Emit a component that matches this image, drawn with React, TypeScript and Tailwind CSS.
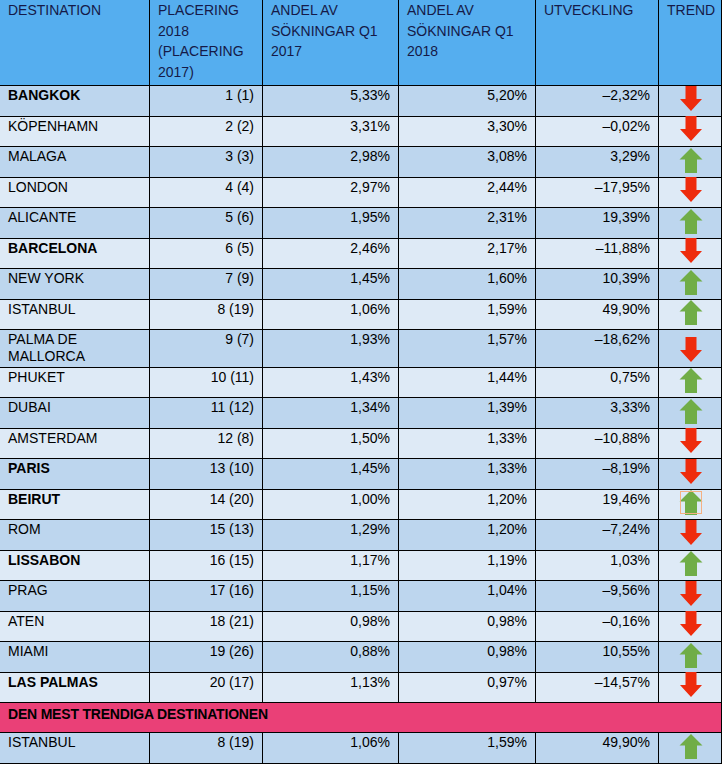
const rows = [
  { name: "BANGKOK", bold: true, rank: "1 (1)", q17: "5,33%", q18: "5,20%", dev: "–2,32%", up: false },
  { name: "KÖPENHAMN", rank: "2 (2)", q17: "3,31%", q18: "3,30%", dev: "–0,02%", up: false },
  { name: "MALAGA", rank: "3 (3)", q17: "2,98%", q18: "3,08%", dev: "3,29%", up: true },
  { name: "LONDON", rank: "4 (4)", q17: "2,97%", q18: "2,44%", dev: "–17,95%", up: false },
  { name: "ALICANTE", rank: "5 (6)", q17: "1,95%", q18: "2,31%", dev: "19,39%", up: true },
  { name: "BARCELONA", bold: true, rank: "6 (5)", q17: "2,46%", q18: "2,17%", dev: "–11,88%", up: false },
  { name: "NEW YORK", rank: "7 (9)", q17: "1,45%", q18: "1,60%", dev: "10,39%", up: true },
  { name: "ISTANBUL", rank: "8 (19)", q17: "1,06%", q18: "1,59%", dev: "49,90%", up: true },
  { name: "PALMA DE MALLORCA", rank: "9 (7)", q17: "1,93%", q18: "1,57%", dev: "–18,62%", up: false },
  { name: "PHUKET", rank: "10 (11)", q17: "1,43%", q18: "1,44%", dev: "0,75%", up: true },
  { name: "DUBAI", rank: "11 (12)", q17: "1,34%", q18: "1,39%", dev: "3,33%", up: true },
  { name: "AMSTERDAM", rank: "12 (8)", q17: "1,50%", q18: "1,33%", dev: "–10,88%", up: false },
  { name: "PARIS", bold: true, rank: "13 (10)", q17: "1,45%", q18: "1,33%", dev: "–8,19%", up: false },
  { name: "BEIRUT", bold: true, rank: "14 (20)", q17: "1,00%", q18: "1,20%", dev: "19,46%", up: true, boxed: true },
  { name: "ROM", rank: "15 (13)", q17: "1,29%", q18: "1,20%", dev: "–7,24%", up: false },
  { name: "LISSABON", bold: true, rank: "16 (15)", q17: "1,17%", q18: "1,19%", dev: "1,03%", up: true },
  { name: "PRAG", rank: "17 (16)", q17: "1,15%", q18: "1,04%", dev: "–9,56%", up: false },
  { name: "ATEN", rank: "18 (21)", q17: "0,98%", q18: "0,98%", dev: "–0,16%", up: false },
  { name: "MIAMI", rank: "19 (26)", q17: "0,88%", q18: "0,98%", dev: "10,55%", up: true },
  { name: "LAS PALMAS", bold: true, rank: "20 (17)", q17: "1,13%", q18: "0,97%", dev: "–14,57%", up: false },
];

function DownArrow() {
  return (
    <svg width="24" height="26" viewBox="0 0 24 26">
      <path d="M6.5 0h11v13H23L12 25 1 13h5.5z" fill="#ee2b0c" />
    </svg>
  );
}

function UpArrow() {
  return (
    <svg width="24" height="25" viewBox="0 0 24 25">
      <path d="M12 0l11.5 11.5H18V25H6V11.5H0.5z" fill="#70ad47" />
    </svg>
  );
}

type Row = (typeof rows)[number] & { bold?: boolean; boxed?: boolean };

function DataRow({ row, dark, h }: { row: Row; dark: boolean; h: string }) {
  const bg = dark ? "bg-[#bdd6ee]" : "bg-[#deeaf6]";
  const cell = `${bg} ${h} px-2 pt-px leading-[17px]`;
  return (
    <>
      <div className={`${cell} ${row.bold ? "font-bold" : ""} pr-10`}>{row.name}</div>
      <div className={`${cell} text-right`}>{row.rank}</div>
      <div className={`${cell} text-right`}>{row.q17}</div>
      <div className={`${cell} text-right`}>{row.q18}</div>
      <div className={`${cell} text-right`}>{row.dev}</div>
      <div className={`${bg} ${h} flex items-end justify-center pb-[4px] pl-[1px]`}>
        {row.up ? (
          <div className="relative flex">
            <UpArrow />
            {row.boxed && (
              <div className="absolute left-[1px] top-[1px] h-[23px] w-[22px] border border-[#f4b183]" />
            )}
          </div>
        ) : (
          <DownArrow />
        )}
      </div>
    </>
  );
}

export default function App() {
  const head = "bg-[#55aeef] px-2 leading-[20.7px] text-[#151a48]";
  return (
    <div className="w-[723px] bg-white" style={{ fontFamily: '"Liberation Sans", Arial, sans-serif' }}>
      <div className="w-[722px] bg-black pr-px pb-px text-[14px] text-black">
        <div className="grid grid-cols-[149px_112px_135px_136px_122px_62px] gap-px">
          <div className={`${head} h-[85px]`}>DESTINATION</div>
          <div className={head}>PLACERING 2018 (PLACERING 2017)</div>
          <div className={head}>ANDEL AV SÖKNINGAR Q1 2017</div>
          <div className={head}>ANDEL AV SÖKNINGAR Q1 2018</div>
          <div className={head}>UTVECKLING</div>
          <div className={head}>TREND</div>

          {rows.map((row, i) => (
            <DataRow
              key={row.name}
              row={row}
              dark={i % 2 === 0}
              h={i === 8 ? "h-[37px]" : i % 2 === 0 ? "h-[30px]" : "h-[29px]"}
            />
          ))}

          <div className="col-span-6 h-[29px] bg-[#ea4077] px-2 pt-[3px] font-bold leading-[17px] tracking-[-0.2px]">
            DEN MEST TRENDIGA DESTINATIONEN
          </div>

          <DataRow row={rows[7]} dark h="h-[30px] pt-[3px]" />
        </div>
      </div>
    </div>
  );
}
